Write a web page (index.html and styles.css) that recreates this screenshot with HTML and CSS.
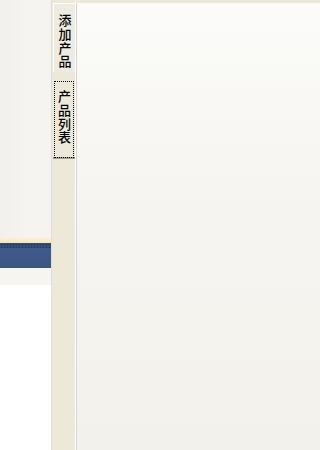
FILE: index.html
```html
<!DOCTYPE html>
<html lang="zh">
<head>
<meta charset="utf-8">
<title>产品</title>
<link rel="stylesheet" href="styles.css">
</head>
<body>
<div class="frame">
  <aside class="side">
    <div class="side-top"></div>
    <div class="side-gold"></div>
    <div class="side-dots"></div>
    <div class="side-blue"></div>
    <div class="side-light"></div>
    <div class="side-white"></div>
  </aside>
  <nav class="tabs">
    <div class="tab tab-active"><span class="tab-label">添加产品</span></div>
    <div class="tab tab-focus"><span class="tab-label">产品列表</span></div>
  </nav>
  <main class="content"></main>
</div>
</body>
</html>
```
FILE: styles.css
```css
html, body {
  margin: 0;
  padding: 0;
  height: 100%;
  background: #ffffff;
  font-family: "Noto Sans CJK SC", "Noto Sans", sans-serif;
}
.frame {
  display: flex;
  height: 450px;
  width: 100%;
  min-width: 241px;
  overflow: hidden;
}
.side {
  width: 51px;
  flex: 0 0 51px;
  display: flex;
  flex-direction: column;
}
.side-top {
  height: 238px;
  background: linear-gradient(90deg, #f1f0ec 0%, #f5f4f0 60%, #f4f3ef 100%);
}
.side-gold {
  height: 5px;
  background: linear-gradient(180deg, #f8f0dc, #fbe6b0);
}
.side-dots {
  height: 5px;
  background-color: #334a7a;
  background-image: radial-gradient(circle, #223563 0.8px, transparent 1px);
  background-size: 3px 3px;
}
.side-blue {
  height: 20px;
  background: linear-gradient(180deg, #3f5b8c, #3b5585);
}
.side-light {
  height: 17px;
  background: #f6f5f0;
}
.side-white {
  flex: 1;
  background: #ffffff;
}
.tabs {
  width: 24px;
  flex: 0 0 24px;
  background: #ece9d8;
  border-left: 1px solid #e2dfd1;
  box-sizing: border-box;
  display: flex;
  flex-direction: column;
  align-items: flex-start;
  padding-top: 3px;
}
.tab {
  width: 22px;
  margin-left: 1px;
  box-sizing: border-box;
  display: flex;
  justify-content: center;
  background: #efede3;
}
.tab-label {
  writing-mode: vertical-rl;
  text-orientation: upright;
  font-size: 13px;
  line-height: 14px;
  letter-spacing: 0.6px;
  color: #000000;
  font-weight: 500;
}
.tab-active {
  height: 69px;
  padding-top: 10px;
  border-top: 1px solid #ffffff;
  border-left: 1px solid #ffffff;
  background: #eeece2;
}
.tab-focus {
  margin-top: 8px;
  height: 79px;
  padding-top: 10px;
  outline: 1px dotted #000000;
  outline-offset: -2px;
  border-bottom: 2px solid #9d9b92;
  background: #ece9d8;
}
.content {
  flex: 1;
  border-top: 3px solid #ece9d8;
  border-left: 1px solid #ffffff;
  box-shadow: inset 1px 0 0 #d9d6c8;
  background: linear-gradient(180deg, #fbfbf9 0%, #f5f4f0 50%, #f2f1ec 100%);
}
```
